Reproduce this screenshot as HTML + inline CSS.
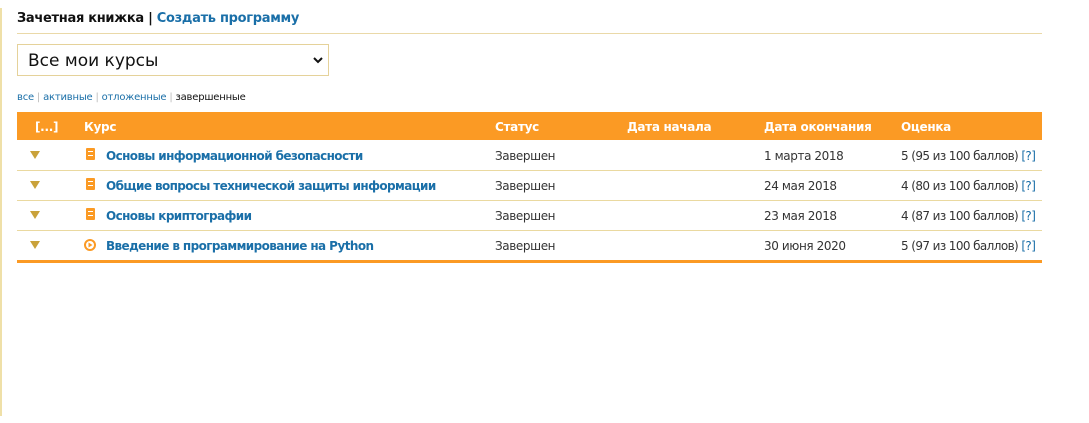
<!DOCTYPE html>
<html><head><meta charset="utf-8"><style>
body{margin:0;width:1089px;height:423px;background:#fff;font-family:"DejaVu Sans","Liberation Sans",sans-serif;position:relative;overflow:hidden}
.vl{position:absolute;left:0;top:8px;width:2px;height:408px;background:#efe0a8}
.t{position:absolute;white-space:nowrap}
.h1{left:17px;top:11px;font-size:13px;font-weight:bold;color:#111;letter-spacing:-0.3px}
.h1 a{color:#1a6fa8}
.hr{position:absolute;left:17px;top:33px;width:1025px;height:1px;background:#ead9a8}
.sel{position:absolute;left:17px;top:44px;width:312px;height:32px;border:1px solid #e5d29a;box-sizing:border-box;font-size:17px;padding:6px 0 0 10px;color:#111}
.sel svg{position:absolute;right:5px;top:11px}
.f{left:17px;top:92px;font-size:10px;color:#bbb;letter-spacing:-0.2px}
.f a{color:#1a6fa8}.f b{font-weight:normal;color:#111}
.th{position:absolute;left:17px;top:112px;width:1025px;height:28px;background:#fb9a24}
.th span{position:absolute;top:8px;font-size:12px;font-weight:bold;color:#fff;letter-spacing:-0.3px;white-space:nowrap}
.row{position:absolute;left:17px;width:1025px;height:30px;border-bottom:1px solid #ead9a0;font-size:12px;letter-spacing:-0.4px}
.row span{position:absolute;top:9px;color:#333;white-space:nowrap}
.row span.g{letter-spacing:-0.6px}
.row .n{left:89px;font-weight:bold;color:#1a6fa8;letter-spacing:-0.6px}
.row .q{color:#1a6fa8;font-style:normal}
.tri{position:absolute;left:13px;top:11px;width:0;height:0;border-left:5px solid transparent;border-right:5px solid transparent;border-top:8px solid #c9a23a}
.doc{position:absolute;left:69px;top:8px;width:9px;height:12px;background:#fb9a24;border-radius:1px}
.doc:after{content:"";position:absolute;left:2px;top:3px;width:5px;height:3px;border-top:1px solid #fff;border-bottom:1px solid #fff}
.bot{position:absolute;left:17px;top:260px;width:1025px;height:3px;background:#fb9a24}
</style></head><body>
<div class="vl"></div>
<div class="t h1">Зачетная книжка | <a>Создать программу</a></div>
<div class="hr"></div>
<div class="sel">Все мои курсы<svg width="10" height="8" viewBox="0 0 10 8"><path d="M1 2 L5 6 L9 2" stroke="#111" stroke-width="2" fill="none"/></svg></div>
<div class="t f"><a>все</a> | <a>активные</a> | <a>отложенные</a> | <b>завершенные</b></div>
<div class="th"><span style="left:18px">[...]</span><span style="left:67px">Курс</span><span style="left:478px">Статус</span><span style="left:610px">Дата начала</span><span style="left:747px">Дата окончания</span><span style="left:884px">Оценка</span></div>
<div class="row" style="top:140px"><i class="tri"></i><i class="doc"></i><span class="n">Основы информационной безопасности</span><span style="left:478px">Завершен</span><span style="left:747px">1 марта 2018</span><span class="g" style="left:884px">5 (95 из 100 баллов) <i class="q">[?]</i></span></div>
<div class="row" style="top:170px"><i class="tri"></i><i class="doc"></i><span class="n">Общие вопросы технической защиты информации</span><span style="left:478px">Завершен</span><span style="left:747px">24 мая 2018</span><span class="g" style="left:884px">4 (80 из 100 баллов) <i class="q">[?]</i></span></div>
<div class="row" style="top:200px"><i class="tri"></i><i class="doc"></i><span class="n">Основы криптографии</span><span style="left:478px">Завершен</span><span style="left:747px">23 мая 2018</span><span class="g" style="left:884px">4 (87 из 100 баллов) <i class="q">[?]</i></span></div>
<div class="row" style="top:230px;border:none"><i class="tri"></i><svg style="position:absolute;left:67px;top:9px" width="12" height="12" viewBox="0 0 12 12"><circle cx="6" cy="6" r="5" fill="none" stroke="#fb9a24" stroke-width="2"/><path d="M4.5 3.5 L8.5 6 L4.5 8.5Z" fill="#fb9a24"/></svg><span class="n">Введение в программирование на Python</span><span style="left:478px">Завершен</span><span style="left:747px">30 июня 2020</span><span class="g" style="left:884px">5 (97 из 100 баллов) <i class="q">[?]</i></span></div>
<div class="bot"></div>
</body></html>
